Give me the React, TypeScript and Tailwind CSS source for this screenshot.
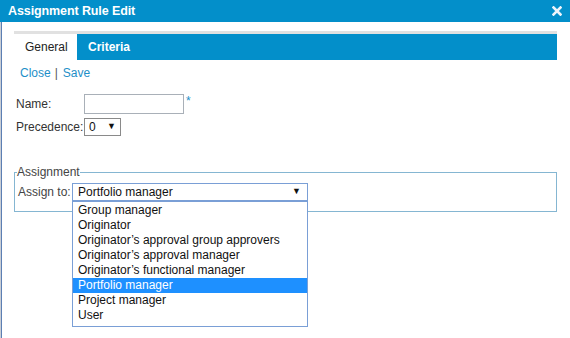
import { useState } from 'react';

const options = [
  'Group manager',
  'Originator',
  'Originator’s approval group approvers',
  'Originator’s approval manager',
  'Originator’s functional manager',
  'Portfolio manager',
  'Project manager',
  'User',
];

function CloseIcon() {
  return (
    <svg width="10" height="10" viewBox="0 0 10 10" className="block">
      <path d="M1.5 1.5 L8.5 8.5 M8.5 1.5 L1.5 8.5" stroke="#eef4fb" strokeWidth="2.6" strokeLinecap="square" />
    </svg>
  );
}

export default function App() {
  const [tab, setTab] = useState('general');
  const selected = 'Portfolio manager';

  return (
    <div className="w-[570px] h-[338px] overflow-hidden bg-white font-['Liberation_Sans',Arial,sans-serif] text-[12px] text-[#333]">
      <div className="h-[22px] bg-[#038fca] flex items-center justify-between pl-[8px] pr-[8px]">
        <span className="text-white font-bold text-[12.5px] tracking-[-0.1px]">Assignment Rule Edit</span>
        <CloseIcon />
      </div>
      <div className="flex h-[316px]">
        <div className="w-[2px] flex">
          <div className="w-[1px] bg-[#c9ced6]" />
          <div className="w-[1px] bg-[#5c7fb3]" />
        </div>
        <div className="flex-1 pl-[12px] pr-[13px] pt-[9px]">
          <div className="border-t-[3px] border-[#e1e1e1]">
            <div className="flex h-[26px] bg-[#038fca]">
              <button
                onClick={() => setTab('general')}
                className="w-[63px] bg-white text-[#222] text-[12px] pl-[11px] text-left"
              >
                General
              </button>
              <button
                onClick={() => setTab('criteria')}
                className="pl-[11px] text-white font-bold text-[12px]"
              >
                Criteria
              </button>
            </div>
          </div>

          <div className="pl-[6px] pt-[6px] text-[12px] text-[#2191c9] leading-[14px]">
            <a href="#" className="text-[#1e8fc8]">Close</a>
            <span className="text-[#555] pl-[4px] pr-[5px]">|</span>
            <a href="#" className="text-[#1e8fc8]">Save</a>
          </div>

          <div className="mt-[14px] pl-[2px] flex flex-col gap-[4px]">
            <div className="flex items-center">
              <span className="w-[68px] text-[#333]">Name:</span>
              <input className="w-[100px] h-[20px] border border-[#a9b0b8] outline-none" />
              <span className="self-start text-[#1e8fc8] text-[12px] leading-[12px] ml-[2px] mt-[1px]">*</span>
            </div>
            <div className="flex items-center">
              <span className="w-[68px] text-[#333]">Precedence:</span>
              <div className="w-[37px] h-[18px] border border-[#8a8a8a] flex items-center justify-between px-[4px] text-[12px] text-[#111]">
                <span>0</span>
                <span className="text-[9px]">▼</span>
              </div>
            </div>
          </div>

          <fieldset className="mt-[29px] border border-[#85b6d2] px-[2px] pb-[10px]">
            <legend className="text-[12px] text-[#444] leading-[14px]">Assignment</legend>
            <div className="flex items-center pt-[4px]">
              <span className="w-[55px] pl-[1px] text-[#444]">Assign to:</span>
              <div className="relative">
                <div className="w-[236px] h-[18px] border border-[#7a9fd6] flex items-center justify-between pl-[5px] pr-[6px] text-[12px] text-[#111]">
                  <span>{selected}</span>
                  <span className="text-[9px]">▼</span>
                </div>
                <ul className="absolute left-0 top-[18px] w-[236px] bg-white border border-[#7a9fd6] pt-[1px] pb-[3px] z-10">
                  {options.map((o) => (
                    <li
                      key={o}
                      className={
                        o === selected
                          ? 'h-[15px] leading-[15px] pl-[5px] text-[12px] bg-[#1e90ff] text-white'
                          : 'h-[15px] leading-[15px] pl-[5px] text-[12px] text-[#111]'
                      }
                    >
                      {o}
                    </li>
                  ))}
                </ul>
              </div>
            </div>
          </fieldset>
        </div>
      </div>
    </div>
  );
}
